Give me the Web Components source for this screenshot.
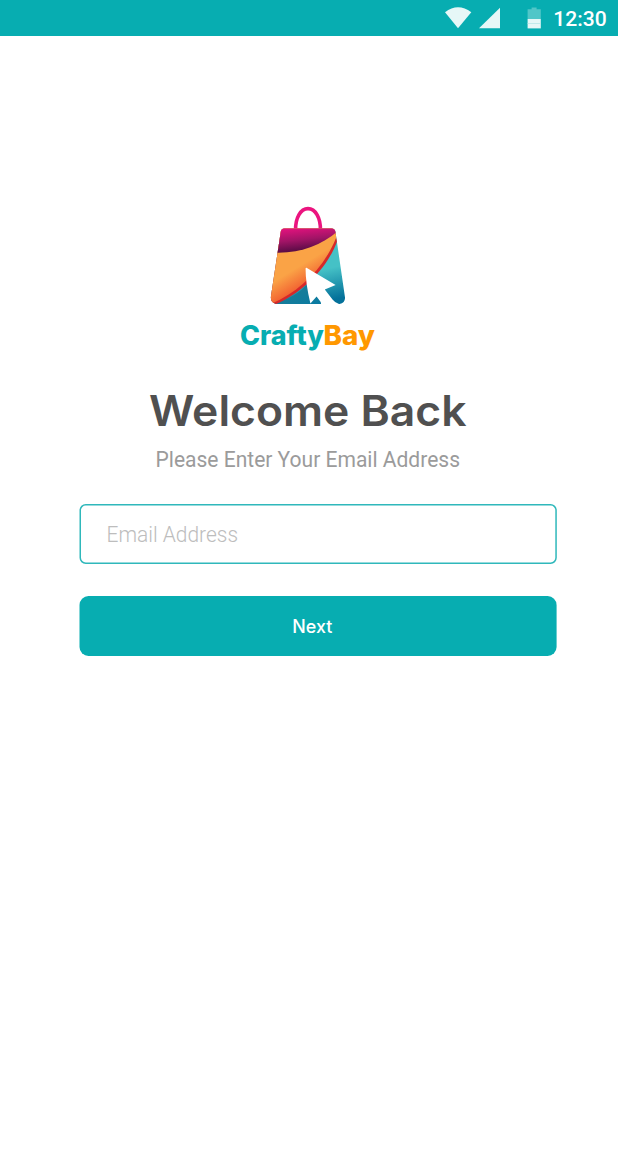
<!DOCTYPE html>
<html lang="en">
<head>
<meta charset="utf-8">
<title>CraftyBay</title>
<style>
html,body{margin:0;background:#fff;height:100%}
body{font-family:Roboto,sans-serif;overflow:hidden}
</style>
</head>
<body>
<welcome-screen></welcome-screen>
<script>
function define(name, markup) {
  const t = document.createElement('template');
  t.innerHTML = markup;
  customElements.define(name, class extends HTMLElement {
    constructor() {
      super();
      this.attachShadow({mode: 'open'}).append(t.content.cloneNode(true));
    }
  });
}
define('status-bar', `
<style>
:host{display:flex;height:36px;background:#07adb1;justify-content:flex-end}
svg{display:block}
</style>
<svg width="188" height="36" viewBox="0 0 188 36">
  <path d="M15 12.300Q28 2.400 41.300 12.300L28 28.300Z" fill="#e6f7f7"/>
  <path d="M49 28.300L70 7.700V28.300Z" fill="#e6f7f7"/>
  <path d="M97.600 9.200h4v-1.800h5v1.800h4.200V19H97.600Z" fill="#51c6c8"/>
  <path d="M97.600 19h13.200v9.400H97.600Z" fill="#e6f7f7"/>
  <path d="M97.600 23.500h13.200" stroke="#b8e6e7" stroke-width=".8"/>
  <text x="123.300" y="26" font-family="Roboto" font-size="21" font-weight="500" fill="#fff" textLength="53.500" lengthAdjust="spacingAndGlyphs">12:30</text>
</svg>`);
define('brand-logo', `
<style>
:host{display:block;width:160px;height:160px}
svg{display:block}
.bag{margin-left:25px}
</style>
<svg class="bag" width="110" height="120" viewBox="0 0 110 120">
  <defs>
    <clipPath id="body"><path d="M29.500 33.500H76.500Q80 33.500 80.500 37L90 102.500Q90.300 108 84.500 109H21Q15 107.500 16 101L25.700 37Q26 33.500 29.500 33.500Z"/></clipPath>
    <linearGradient id="pink" x1="0" y1="0" x2=".25" y2="1"><stop offset=".15" stop-color="#e6127f"/><stop offset=".6" stop-color="#a11466"/><stop offset="1" stop-color="#540b43"/></linearGradient>
    <linearGradient id="orange" gradientUnits="userSpaceOnUse" x1="38" y1="66" x2="58" y2="99"><stop offset=".2" stop-color="#faa346"/><stop offset=".85" stop-color="#f04e2b"/></linearGradient>
    <linearGradient id="blue" gradientUnits="userSpaceOnUse" x1="73" y1="70" x2="81" y2="104"><stop offset=".1" stop-color="#45c1c6"/><stop offset="1" stop-color="#04719a"/></linearGradient>
    <linearGradient id="deep" x1="0" y1="0" x2="1" y2="1"><stop offset="0" stop-color="#247f91"/><stop offset="1" stop-color="#067aa4"/></linearGradient>
  </defs>
  <path d="M40.600 35C40.300 23 45.500 13.600 53 13.600S65.700 23 65.400 35" fill="none" stroke="#eb147f" stroke-width="3.600"/>
  <g clip-path="url(#body)">
    <rect x="10" y="30" width="85" height="84" fill="url(#blue)"/>
    <path d="M18 109C33 104 45 99 54 86L70 112H18Z" fill="url(#deep)"/>
    <path d="M10 113L20 109.500C45 99 71 76 82.300 46L79 30H10Z" fill="#d6282a"/>
    <path d="M10 111L18 108C43 97 69 74 81.400 42L79 30H10Z" fill="url(#orange)"/>
    <path d="M17 57.500C44 59 65 51 83 36V30H17Z" fill="url(#pink)"/>
  </g>
  <path d="M51.500 72.800L80.600 90L69.800 94.500L77.500 104.500Q80 107.800 84 109L81 111H66.500L65.700 107L61.600 101.600L55.400 108.500Q50.500 88 50.600 74Q50.500 72.500 51.500 72.800Z" fill="#fff"/>
</svg>
<svg width="160" height="40" viewBox="0 0 160 40" font-family="Inter" font-weight="800" font-size="26.500">
  <text x="10" y="29.500" fill="#07adb1" textLength="84" lengthAdjust="spacingAndGlyphs">Crafty</text>
  <text x="93.500" y="29.500" fill="#ff9800" textLength="51.500" lengthAdjust="spacingAndGlyphs">Bay</text>
</svg>`);
define('page-heading', `
<style>
:host{display:block;width:340px;height:100px}
svg{display:block}
</style>
<svg width="340" height="100" viewBox="0 0 340 100">
  <text x="9" y="45.500" font-family="Inter" font-weight="600" font-size="42" fill="#505050" textLength="317.500" lengthAdjust="spacingAndGlyphs">Welcome Back</text>
  <text x="15.500" y="87.300" font-family="Roboto" font-size="21.300" fill="#9b9b9b" textLength="304.500" lengthAdjust="spacingAndGlyphs">Please Enter Your Email Address</text>
</svg>`);
define('text-field', `
<style>
:host{display:block;width:478px;height:60px}
svg{display:block}
</style>
<svg width="478" height="60" viewBox="0 0 478 60">
  <rect x="1.250" y=".75" width="475.800" height="58.500" rx="5.500" fill="#fff" stroke="#2fb8bb" stroke-width="1.500"/>
  <text x="27.500" y="38" font-family="Roboto" font-size="21.300" font-weight="300" fill="#bdbdbd" textLength="131.500" lengthAdjust="spacingAndGlyphs">Email Address</text>
</svg>`);
define('primary-button', `
<style>
:host{display:block;width:478px;height:60px}
svg{display:block}
</style>
<svg width="478" height="60" viewBox="0 0 478 60">
  <rect x=".5" width="477.100" height="60" rx="9" fill="#07adb1"/>
  <text x="213.300" y="37" font-family="Inter" font-weight="500" font-size="18.300" fill="#fff" textLength="40" lengthAdjust="spacingAndGlyphs">Next</text>
</svg>`);
define('welcome-screen', `
<style>
:host{display:flex;flex-direction:column;height:1167px;background:#fff}
main{display:flex;flex-direction:column;align-items:flex-start;padding-top:159px}
brand-logo{margin-left:230px}
page-heading{margin:25px 0 24px 140px}
text-field{margin-left:79px}
primary-button{margin:32px 0 0 79px}
</style>
<status-bar></status-bar>
<main>
  <brand-logo></brand-logo>
  <page-heading></page-heading>
  <text-field></text-field>
  <primary-button></primary-button>
</main>`);
</script>
</body>
</html>
